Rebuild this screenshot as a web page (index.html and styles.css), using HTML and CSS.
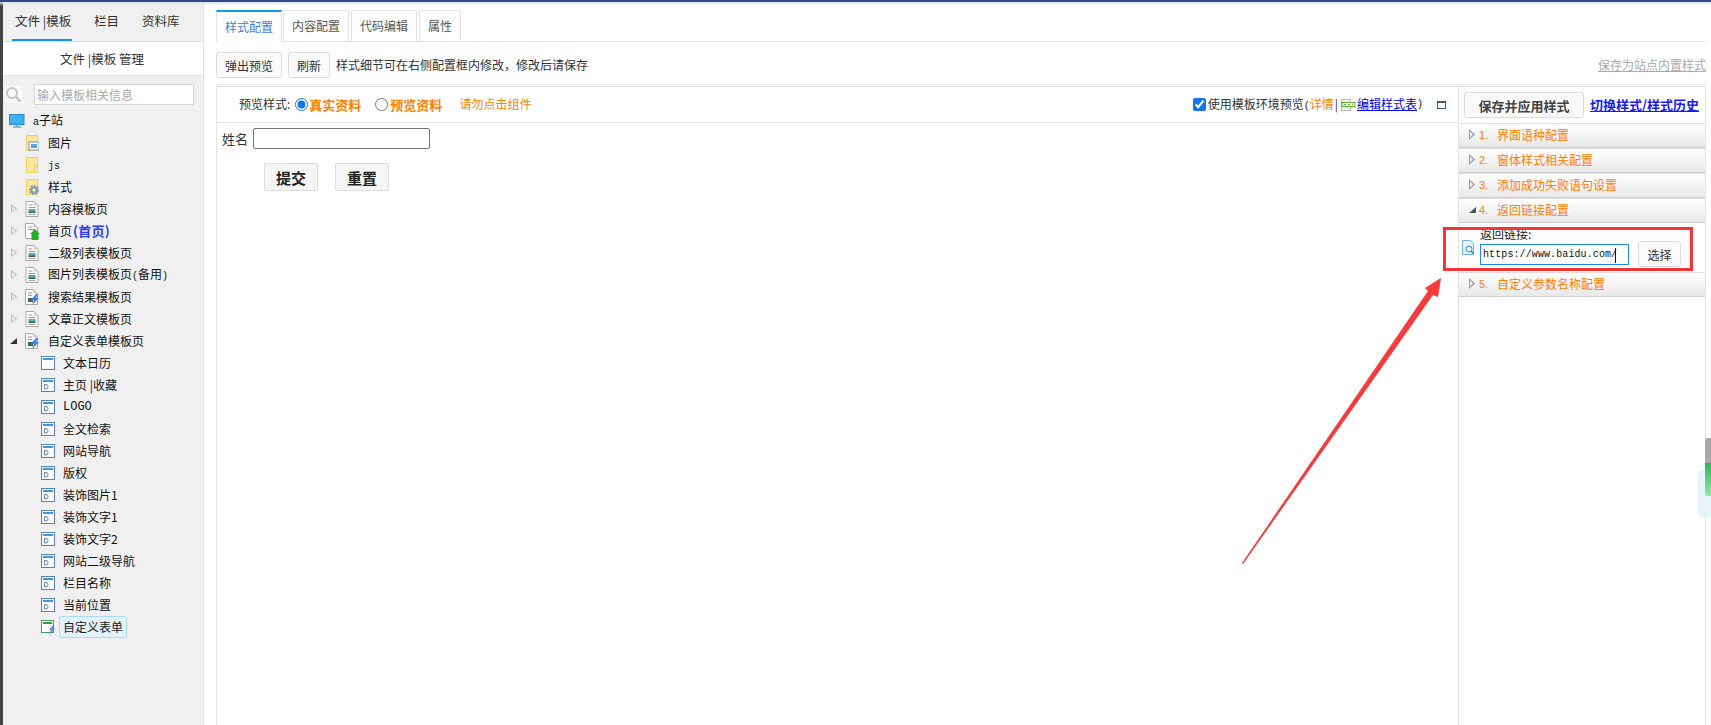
FILE: index.html
```html
<!DOCTYPE html>
<html lang="zh">
<head>
<meta charset="utf-8">
<title>样式配置</title>
<link rel="stylesheet" href="styles.css">
</head>
<body>
<svg class="defs" width="0" height="0" aria-hidden="true">
  <symbol id="i-doc" viewBox="0 0 13 16">
    <path d="M.5.5h8l4 4v11H.5z" fill="#fff" stroke="#a8a8a8"/>
    <path d="M8.5.5v4h4z" fill="#ccc"/>
    <path d="M3 4h4M3 6.500h7" stroke="#999"/>
    <rect x="3" y="8" width="7" height="4" fill="#5aa7c9"/>
    <rect x="3" y="10.500" width="7" height="1.500" fill="#3c6d4a"/>
    <path d="M3 13.500h7" stroke="#aaa"/>
  </symbol>
  <symbol id="i-home" viewBox="0 0 15 17">
    <path d="M.5.500h8l4 4v11H.5z" fill="#fff" stroke="#a8a8a8"/>
    <path d="M8.500.500v4h4z" fill="#ccc"/>
    <path d="M3 4h4M3 6.500h7" stroke="#999"/>
    <path d="M10 6l5 5h-1.500v6h-7v-6H5z" fill="#1fb02c"/>
  </symbol>
  <symbol id="i-bolt" viewBox="0 0 15 16">
    <path d="M.5.500h8l4 4v11H.5z" fill="#fff" stroke="#a8a8a8"/>
    <path d="M8.500.500v4h4z" fill="#ccc"/>
    <path d="M3 4h4M3 6.500h4" stroke="#999"/>
    <rect x="3" y="9" width="5" height="4" fill="#3c6d4a"/>
    <path d="M11 5L6 11h3l-2 5 7-7h-3l2-4z" fill="#3f7cf2"/>
  </symbol>
  <symbol id="i-win" viewBox="0 0 14 14">
    <rect x=".5" y=".5" width="13" height="13" fill="#fff" stroke="#5b7fbb"/>
    <rect x="2" y="2" width="10" height="2" fill="#3c97e0"/>
    <path d="M3.500 6.500v4.500h1.500q2 0 2-2.250T5 6.500z" fill="none" stroke="#5b7fbb"/>
  </symbol>
  <symbol id="i-win0" viewBox="0 0 14 14">
    <rect x=".5" y=".5" width="13" height="13" fill="#fff" stroke="#5b7fbb"/>
    <rect x="2" y="2" width="10" height="2" fill="#3c97e0"/>
  </symbol>
  <symbol id="i-form" viewBox="0 0 15 15">
    <rect x=".5" y=".5" width="12" height="12" fill="#fff" stroke="#4a9d56"/>
    <rect x="2" y="2" width="9" height="2" fill="#2f9e44"/>
    <path d="M12 5L8 10h2l-2 5 6-6.500h-2.500l1.500-3.500z" fill="#4f86f7"/>
  </symbol>
  <symbol id="i-folder" viewBox="0 0 12 16">
    <rect x=".5" y=".5" width="11" height="15" fill="#fee79a" stroke="#f2cf66"/>
  </symbol>
</svg>

<div class="topline"></div>
<div class="app">
  <aside class="sidebar">
    <nav class="side-tabs">
      <a class="side-tab side-tab-on">文件 |模板</a>
      <a class="side-tab side-tab-b">栏目</a>
      <a class="side-tab side-tab-c">资料库</a>
    </nav>
    <div class="side-head">文件 |模板 管理</div>
    <div class="side-search">
      <span class="search-ico">
        <svg width="17" height="17" viewBox="0 0 17 17"><circle cx="7" cy="7" r="5" fill="none" stroke="#c4c4c4" stroke-width="2"/><path d="M10.500 10.500l5 5" stroke="#c4c4c4" stroke-width="2.500"/></svg>
      </span>
      <input class="search-input" placeholder="输入模板相关信息">
    </div>
    <ul class="tree">
      <li class="row root">
        <svg class="ico" width="16" height="14" viewBox="0 0 16 14"><rect x=".5" y=".5" width="14.500" height="10" fill="#3fb0f6" stroke="#2b88c8"/><path d="M8 11v2M4 13h8" stroke="#2b88c8"/></svg>
        <span class="lbl"><span class="mono">a</span>子站</span>
      </li>
      <li class="row l1">
        <svg class="ico" width="14" height="16" viewBox="0 0 14 16"><use href="#i-folder"/><rect x="4" y="7" width="10" height="8" fill="#fff" stroke="#5aa0e0"/><rect x="6" y="9" width="6" height="4" fill="#5aa7c9"/></svg>
        <span class="lbl">图片</span>
      </li>
      <li class="row l1">
        <svg class="ico" width="14" height="16" viewBox="0 0 14 16"><use href="#i-folder"/><rect x="9.500" y="8.500" width="3" height="7" fill="#fee79a" stroke="#f2cf66"/></svg>
        <span class="lbl"><span class="mono">js</span></span>
      </li>
      <li class="row l1">
        <svg class="ico" width="14" height="16" viewBox="0 0 14 16"><use href="#i-folder"/><circle cx="9" cy="11" r="4" fill="none" stroke="#7a98b8" stroke-width="2" stroke-dasharray="2 1"/><circle cx="9" cy="11" r="2.500" fill="none" stroke="#7a98b8" stroke-width="1.500"/></svg>
        <span class="lbl">样式</span>
      </li>
      <li class="row l1"><i class="tw"></i><svg class="ico" width="14" height="16"><use href="#i-doc"/></svg><span class="lbl">内容模板页</span></li>
      <li class="row l1"><i class="tw"></i><svg class="ico" width="15" height="17"><use href="#i-home"/></svg><span class="lbl lbl-home">首页<b class="home-tag">(首页)</b></span></li>
      <li class="row l1"><i class="tw"></i><svg class="ico" width="14" height="16"><use href="#i-doc"/></svg><span class="lbl">二级列表模板页</span></li>
      <li class="row l1"><i class="tw"></i><svg class="ico" width="14" height="16"><use href="#i-doc"/></svg><span class="lbl">图片列表模板页<span class="mono">(</span>备用<span class="mono">)</span></span></li>
      <li class="row l1"><i class="tw"></i><svg class="ico" width="15" height="16"><use href="#i-bolt"/></svg><span class="lbl lbl-bolt">搜索结果模板页</span></li>
      <li class="row l1"><i class="tw"></i><svg class="ico" width="14" height="16"><use href="#i-doc"/></svg><span class="lbl">文章正文模板页</span></li>
      <li class="row l1"><i class="tw tw-open"></i><svg class="ico" width="15" height="16"><use href="#i-bolt"/></svg><span class="lbl lbl-bolt">自定义表单模板页</span></li>
      <li class="row l2"><svg class="ico" width="14" height="14"><use href="#i-win0"/></svg><span class="lbl">文本日历</span></li>
      <li class="row l2"><svg class="ico" width="14" height="14"><use href="#i-win"/></svg><span class="lbl">主页 |收藏</span></li>
      <li class="row l2"><svg class="ico" width="14" height="14"><use href="#i-win"/></svg><span class="lbl mono">LOGO</span></li>
      <li class="row l2"><svg class="ico" width="14" height="14"><use href="#i-win"/></svg><span class="lbl">全文检索</span></li>
      <li class="row l2"><svg class="ico" width="14" height="14"><use href="#i-win"/></svg><span class="lbl">网站导航</span></li>
      <li class="row l2"><svg class="ico" width="14" height="14"><use href="#i-win"/></svg><span class="lbl">版权</span></li>
      <li class="row l2"><svg class="ico" width="14" height="14"><use href="#i-win"/></svg><span class="lbl">装饰图片1</span></li>
      <li class="row l2"><svg class="ico" width="14" height="14"><use href="#i-win"/></svg><span class="lbl">装饰文字1</span></li>
      <li class="row l2"><svg class="ico" width="14" height="14"><use href="#i-win"/></svg><span class="lbl">装饰文字2</span></li>
      <li class="row l2"><svg class="ico" width="14" height="14"><use href="#i-win"/></svg><span class="lbl">网站二级导航</span></li>
      <li class="row l2"><svg class="ico" width="14" height="14"><use href="#i-win"/></svg><span class="lbl">栏目名称</span></li>
      <li class="row l2"><svg class="ico" width="14" height="14"><use href="#i-win"/></svg><span class="lbl">当前位置</span></li>
      <li class="row l2"><svg class="ico" width="15" height="15"><use href="#i-form"/></svg><span class="lbl lbl-sel">自定义表单</span></li>
    </ul>
  </aside>

  <main class="main">
    <nav class="tabs">
      <a class="tab tab-on">样式配置</a>
      <a class="tab">内容配置</a>
      <a class="tab">代码编辑</a>
      <a class="tab tab-s">属性</a>
    </nav>
    <div class="toolbar">
      <button class="btn btn-pop">弹出预览</button>
      <button class="btn btn-ref">刷新</button>
      <span class="hint">样式细节可在右侧配置框内修改，修改后请保存</span>
      <a class="save-site">保存为站点内置样式</a>
    </div>
    <section class="panel">
      <div class="stage">
        <div class="stage-bar">
          <span class="pv-label">预览样式:</span>
          <input class="radio" type="radio" name="pv" checked>
          <b class="orange pv-real">真实资料</b>
          <input class="radio radio-2" type="radio" name="pv">
          <b class="orange pv-demo">预览资料</b>
          <span class="orange pv-warn">请勿点击组件</span>
          <span class="env">
            <input class="check" type="checkbox" checked>
            <span>使用模板环境预览<span class="mono">(</span><span class="orange">详情</span><span class="sep">|</span></span>
            <svg class="css-ico" width="15" height="12" viewBox="0 0 15 12"><rect x=".5" y=".5" width="9" height="11" fill="#eee" stroke="#bbb"/><rect x="1" y="3.500" width="13" height="4" fill="#fff" stroke="#5cb531"/><path d="M3 5.500h2M7 5.500h2M11 5.500h1" stroke="#5cb531"/></svg>
            <a class="blue-link">编辑样式表</a><span class="mono">)</span>
          </span>
          <span class="maxbtn"><i></i></span>
        </div>
        <form class="demo-form">
          <div class="demo-row">
            <label class="demo-label">姓名</label>
            <input class="demo-input">
          </div>
          <div class="demo-btns">
            <button class="demo-btn" type="button">提交</button>
            <button class="demo-btn" type="button">重置</button>
          </div>
        </form>
      </div>
      <aside class="config">
        <div class="config-top">
          <button class="btn btn-save">保存并应用样式</button>
          <a class="hist">切换样式/样式历史</a>
        </div>
        <div class="acc"><i class="acc-tw"></i><span class="acc-n">1.</span>界面语种配置</div>
        <div class="acc"><i class="acc-tw"></i><span class="acc-n">2.</span>窗体样式相关配置</div>
        <div class="acc"><i class="acc-tw"></i><span class="acc-n">3.</span>添加成功失败语句设置</div>
        <div class="acc"><i class="acc-tw acc-open"></i><span class="acc-n">4.</span>返回链接配置</div>
        <div class="acc-body">
          <svg class="link-ico" width="13" height="15" viewBox="0 0 13 15"><path d="M.5.500h8l3 3v11H.5z" fill="#eaf5fd" stroke="#6db3e8"/><circle cx="7" cy="9" r="3" fill="#fff" stroke="#2f8fd8"/><path d="M9 11l3 3" stroke="#2f8fd8" stroke-width="1.500"/></svg>
          <div class="link-col">
            <label class="link-label">返回链接:</label>
            <div class="link-row">
              <input class="link-input" value="https://www.baidu.com/">
              <i class="caret"></i>
              <button class="btn btn-pick">选择</button>
            </div>
          </div>
        </div>
        <div class="acc"><i class="acc-tw"></i><span class="acc-n">5.</span>自定义参数名称配置</div>
      </aside>
    </section>
  </main>
</div>

<div class="red-box"></div>
<svg class="arrow" width="215" height="300" viewBox="0 0 215 300">
  <path d="M2 288L188 16 185 13 201 3 198 22 193 20 3 289z" fill="#f83a3a"/>
</svg>
<div class="float-wid"><div class="float-gauge"></div></div>
</body>
</html>
```
FILE: styles.css
```css
* { box-sizing: border-box; }
html, body { margin: 0; height: 100%; overflow: hidden; }
body {
  background: #fff;
  color: #222;
  font: 12px/1.2 "Noto Sans CJK SC", "Liberation Sans", sans-serif;
  display: flex;
  flex-direction: column;
  height: 725px;
  position: relative;
}
.defs { position: absolute; }
ul { list-style: none; margin: 0; padding: 0; }
a { cursor: pointer; }
.mono { font-family: "Liberation Mono", monospace; font-size: 10px; color: #111; }

.topline {
  height: 6px;
  flex: none;
  margin-bottom: -6px;
  background: linear-gradient(#2e4a8c 0, #2e4a8c 2px, #dfe2e8 2px, #ffffff00 6px);
  position: relative;
  z-index: 2;
}
.app { flex: 1; display: flex; min-height: 0; border-left: 3px solid #444; }

/* Sidebar */
.sidebar {
  width: 201px;
  flex: none;
  background: #f0f0f0;
  border-right: 1px solid #e2e2e2;
}
.side-tabs { height: 42px; display: flex; border-bottom: 1px solid #dedede; position: relative; }
.side-tab { font-size: 12.5px; line-height: 42px; color: #333; }
.side-tab-on { margin-left: 9px; padding: 0 2px 0 3px; width: 60px; text-align: center; height: 41px; border-bottom: 2px solid #1296ee; white-space: nowrap; }
.side-tab-b { margin-left: 22px; }
.side-tab-c { margin-left: 23px; }
.side-head {
  height: 34px;
  background: #fff;
  border-bottom: 1px solid #dedede;
  text-align: center;
  line-height: 33px;
  font-size: 12.5px;
  color: #333;
  padding-right: 2px;
}
.side-search { height: 34px; display: flex; align-items: center; padding-top: 3px; }
.search-ico { width: 17px; height: 17px; background: #f8f8f8; margin-left: 2px; display: block; line-height: 0; }
.search-input {
  width: 160px;
  height: 21px;
  margin-left: 12px;
  border: 1px solid #d8d8d8;
  background: #fff;
  padding: 0 2px;
  font: 12px "Noto Sans CJK SC", sans-serif;
}
.search-input::placeholder { color: #aaa; }
.tree { margin-top: 0; }
.row { height: 22px; display: flex; align-items: center; position: relative; color: #111; }
.root { padding-left: 6px; }
.root .lbl { margin-left: 8px; }
.l1 { padding-left: 22px; }
.l1 .lbl { margin-left: 9px; }
.l2 { padding-left: 38px; }
.l2 .lbl { margin-left: 8px; }
.ico { flex: none; display: block; }
.lbl { white-space: nowrap; font-size: 12px; }
.lbl-bolt { margin-left: 8px !important; }
.lbl-home { margin-left: 8px !important; }
.home-tag { color: #2a3cf0; font-weight: 700; font-size: 13px; margin-left: 1px; letter-spacing: .3px; }
.lbl-sel {
  margin-left: 3px !important;
  height: 22px;
  line-height: 20px;
  padding: 0 3px;
  width: 68px;
  background: #e2f3fc;
  border: 1px solid #a6dcf7;
  border-radius: 3px;
  font-size: 12px;
  color: #222;
}
.tw {
  position: absolute;
  left: 8px;
  top: 6px;
  width: 6px;
  height: 9px;
  background: linear-gradient(#bbb, #bbb);
  clip-path: polygon(0 0, 100% 50%, 0 100%, 0 0, 1px 2px, 1px 7.500px, 4.500px 50%, 1px 2px);
}
.tw-open { width: 7px; height: 6px; top: 8px; left: 7px; background: #333; clip-path: polygon(100% 0, 100% 100%, 0 100%); }

/* Main */
.main { flex: 1; min-width: 0; padding: 10px 5px 0 12px; display: flex; flex-direction: column; }
.tabs { display: flex; height: 32px; border-bottom: 1px solid #e4e4e4; flex: none; }
.tab {
  width: 66px;
  height: 31px;
  margin-right: 2px;
  text-align: center;
  line-height: 29px;
  color: #555;
  border: 1px solid #e4e4e4;
  border-bottom: 0;
}
.tab-s { width: 42px; }
.tab-on { color: #3a7fd5; border-top: 2px solid #1296ee; height: 32px; background: #fff; position: relative; margin-right: 1px; border-bottom: 0; }
.toolbar { height: 43px; flex: none; display: flex; align-items: center; border-bottom: 1px solid #ececec; padding: 10px 0 6px; margin-bottom: 1px; }
.btn {
  font: 12px "Noto Sans CJK SC", sans-serif;
  color: #333;
  background: #fafafa;
  border: 1px solid #dcdcdc;
  border-radius: 3px;
  padding: 0;
  height: 26px;
}
.btn-pop { width: 66px; }
.btn-ref { width: 42px; margin-left: 6px; }
.hint { margin-left: 6px; color: #333; }
.save-site { margin-left: auto; color: #aaa; text-decoration: underline; }

.panel { flex: 1; min-height: 0; display: flex; border: 1px solid #e4e4e4; border-bottom: 0; }
.stage { flex: 1; min-width: 0; }
.stage-bar {
  height: 36px;
  border-bottom: 1px solid #e4e4e4;
  display: flex;
  align-items: center;
  padding-left: 22px;
}
.pv-label { color: #333; }
.radio { width: 13px; height: 13px; margin: 0 0 0 5px; accent-color: #1278f0; }
.radio-2 { margin-left: 14px; }
.orange { color: #ff8000; }
b.orange { font-size: 13px; }
.pv-real { margin-left: 1px; }
.pv-demo { margin-left: 2px; }
.pv-warn { margin-left: 17px; }
.env { margin-left: auto; display: flex; align-items: center; color: #333; }
.check { width: 13px; height: 13px; margin: 0 2px 0 0; accent-color: #1278f0; }
.sep { margin: 0 3px 0 1px; color: #333; }
.css-ico { margin-right: 1px; }
.blue-link { color: #0000ee; text-decoration: underline; }
.maxbtn {
  width: 19px;
  height: 14px;
  margin: 0 7px 0 9px;
  background: #f6fbff;
  display: flex;
  align-items: center;
  justify-content: center;
}
.maxbtn i { width: 9px; height: 8px; border: 1px solid #555; border-top-width: 2px; }
.demo-form { padding: 5px 0 0 5px; }
.demo-row { display: flex; align-items: center; height: 21px; }
.demo-label { color: #333; font-size: 13px; }
.demo-input { width: 177px; height: 21px; margin-left: 5px; border: 1px solid #777; border-radius: 2px; background: #fff; }
.demo-btns { display: flex; gap: 17px; margin: 14px 0 0 42px; }
.demo-btn {
  width: 54px;
  height: 28px;
  background: #f5f5f5;
  border: 1px solid #dcdcdc;
  border-radius: 2px;
  font: 700 15px "Noto Sans CJK SC", sans-serif;
  color: #222;
  padding: 0;
}

/* Right config */
.config { width: 247px; flex: none; border-left: 1px solid #e4e4e4; }
.config-top { height: 36px; display: flex; align-items: center; padding-left: 5px; }
.btn-save { width: 120px; font-size: 13px; font-weight: 700; color: #444; height: 26px; }
.hist { margin-left: 6px; font-size: 13px; font-weight: 700; color: #1a1aee; text-decoration: underline; white-space: nowrap; }
.acc {
  height: 25px;
  display: flex;
  align-items: center;
  color: #ff8000;
  position: relative;
  padding-left: 20px;
  border-top: 1px solid #e0e0e0;
  border-bottom: 1px solid #cfcfcf;
  background: linear-gradient(#fff, #e8e8e8);
}
.acc-n { width: 18px; font-family: "Liberation Sans", sans-serif; font-size: 11px; }
.acc-tw {
  position: absolute;
  left: 10px;
  top: 5px;
  width: 6px;
  height: 11px;
  background: #9a9aa8;
  clip-path: polygon(0 0, 100% 50%, 0 100%, 0 0, 1px 2.500px, 1px 8.500px, 4px 50%, 1px 2.500px);
}
.acc-open { width: 7px; height: 6px; top: 8px; left: 10px; background: #555; clip-path: polygon(100% 0, 100% 100%, 0 100%); }
.acc-body { height: 49px; display: flex; align-items: center; background: #fff; padding-left: 3px; }
.link-ico { flex: none; }
.link-col { margin-left: 5px; }
.link-label { display: block; line-height: 14px; height: 14px; color: #222; margin-top: -1px; }
.link-row { display: flex; align-items: center; position: relative; }
.link-input {
  width: 149px;
  height: 21px;
  border: 1px solid #1e88e5;
  padding: 0 2px;
  font: 10px "Liberation Mono", monospace;
  letter-spacing: .1px;
  color: #111;
  background: #fff;
}
.caret { position: absolute; left: 135px; top: 7px; width: 1px; height: 15px; background: #111; }
.btn-pick { width: 43px; margin-left: 9px; }

/* Annotations */
.red-box {
  position: absolute;
  left: 1443px;
  top: 227px;
  width: 250px;
  height: 44px;
  border: 3px solid #f53535;
}
.arrow { position: absolute; left: 1240px; top: 275px; }
.float-wid {
  position: absolute;
  right: 0;
  top: 470px;
  width: 13px;
  height: 47px;
  background: #e8f4fc;
  border-radius: 4px 0 0 4px;
}
.float-gauge {
  position: absolute;
  right: 0;
  top: -32px;
  width: 6px;
  height: 58px;
  border-radius: 3px 0 0 3px;
  background: linear-gradient(#a8a8a8 0, #a8a8a8 25px, #22b85c 25px, #9be7a5 100%);
}
```
